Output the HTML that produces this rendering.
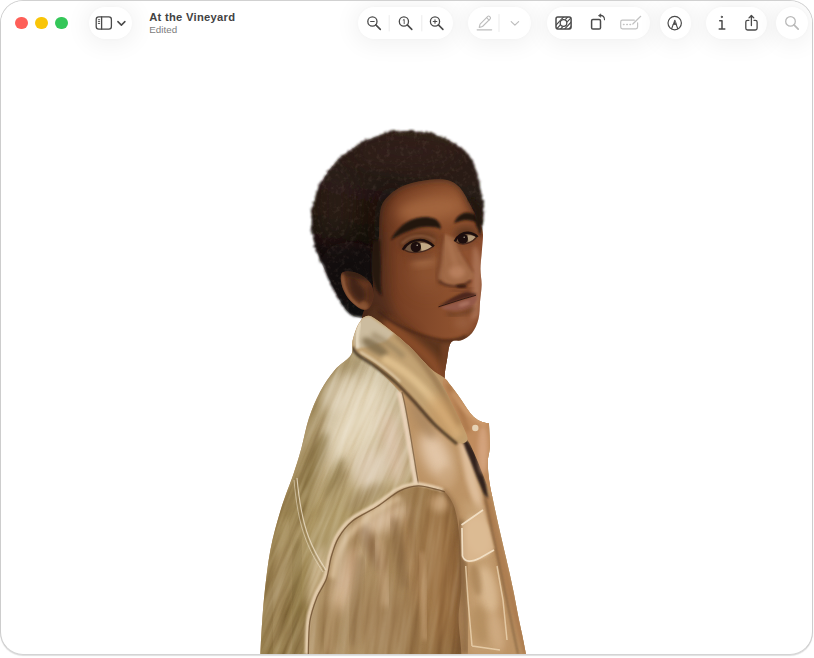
<!DOCTYPE html>
<html lang="en"><head><meta charset="utf-8"><title>At the Vineyard</title>
<style>

html,body{margin:0;padding:0;background:#fff;}
body{width:814px;height:658px;overflow:hidden;position:relative;font-family:"Liberation Sans",sans-serif;}
.win{position:absolute;left:0;top:0;width:811px;height:653px;border:1px solid #cdcdcd;border-top-color:#d1d1d1;border-bottom-color:#d4d4d4;border-radius:23px;background:#fff;overflow:hidden;box-shadow:0 1px 1px rgba(0,0,0,.13);}
.tb{position:absolute;left:0;top:0;width:100%;height:60px;background:#fff;}
.pill{position:absolute;top:6.2px;height:31.5px;border-radius:16px;background:#fff;box-shadow:0 2px 22px 5px rgba(0,0,0,.05),0 0 4px rgba(0,0,0,.02);}
.dot{position:absolute;top:15.7px;width:12.6px;height:12.6px;border-radius:50%;}
.title{position:absolute;left:148.2px;top:10.3px;font-size:11.2px;font-weight:bold;color:#424242;letter-spacing:.28px;white-space:nowrap;}
.sub{position:absolute;left:148.3px;top:23.4px;font-size:9.8px;color:#7d7d7d;white-space:nowrap;}
.ico{position:absolute;left:0;top:0;}
.photo{position:absolute;left:-1px;top:-1px;}

</style></head>
<body>
<div class="win">

<div class="tb"></div>
<div class="dot" style="left:14.2px;background:#fe5f58;"></div>
<div class="dot" style="left:34.2px;background:#f9c507;"></div>
<div class="dot" style="left:54.2px;background:#34c759;"></div>
<div class="pill" style="left:88px;width:42.5px;"></div>
<div class="pill" style="left:356.5px;width:95.5px;"></div>
<div class="pill" style="left:466.5px;width:63.5px;"></div>
<div class="pill" style="left:546px;width:103px;"></div>
<div class="pill" style="left:659px;width:30.5px;"></div>
<div class="pill" style="left:705px;width:61px;"></div>
<div class="pill" style="left:775px;width:32px;"></div>
<div class="title">At the Vineyard</div>
<div class="sub">Edited</div>
<svg class="ico" style="left:-1px;top:-1px" width="814" height="50" viewBox="0 0 814 50" fill="none" stroke="#4a4a4a" stroke-width="1.3" stroke-linecap="round" stroke-linejoin="round">
 <!-- sidebar -->
 <rect x="96.2" y="16.9" width="15.2" height="12.2" rx="2.6"/>
 <path d="M101.6 17v12"/>
 <path d="M98.3 19.7h1.4M98.3 21.6h1.4M98.3 23.5h1.4" stroke-width="0.9"/>
 <path d="M117.9 21.6l3.500 3.500 3.500-3.500" stroke-width="1.500"/>
 <!-- zoom out -->
 <g>
  <circle cx="372.400" cy="21.500" r="4.600"/><path d="M375.800 24.900l4.500 4.500" stroke-width="1.600"/><path d="M370.600 21.500h3.600" stroke-width="1.100"/>
  <circle cx="403.900" cy="21.500" r="4.600"/><path d="M407.300 24.900l4.500 4.500" stroke-width="1.600"/><path d="M403.200 20.100l1-.7v4.300" stroke-width="0.900"/>
  <circle cx="435" cy="21.500" r="4.600"/><path d="M438.400 24.900l4.500 4.500" stroke-width="1.600"/><path d="M433.200 21.500h3.600M435 19.700v3.600" stroke-width="1.100"/>
 </g>
 <path d="M389.200 15.500v15.500M421.800 15.500v15.500" stroke="#ececec" stroke-width="1"/>
 <!-- markup pencil (disabled) -->
 <g stroke="#bdbdbd" stroke-width="1.1">
  <path d="M479.200 27.400l.9-3.300 7.700-7.700a1.150 1.150 0 0 1 1.600 0l.8.8a1.150 1.150 0 0 1 0 1.600l-7.700 7.700z"/>
  <path d="M486.600 17.700l2.400 2.400"/>
  <path d="M477.200 29.800h14.400" stroke-width="1.3"/>
  <path d="M511.200 21.600l3.700 3.500 3.700-3.500" stroke-width="1.2"/>
 </g>
 <path d="M499 14.500v17" stroke="#ebebeb" stroke-width="1"/>
 <!-- remove background -->
 <g>
  <clipPath id="rbclip"><rect x="556" y="17.100" width="15.100" height="11.800" rx="1.800"/></clipPath>
  <path d="M551.5 30l13-14M555.6 30l13-14M559.7 30l13-14M563.8 30l13-14M567.9 30l13-14M572.0 30l13-14" stroke-width="1.150" clip-path="url(#rbclip)" stroke-linecap="butt"/>
  <circle cx="563.500" cy="23" r="3.800" fill="#fff" stroke="none"/>
  <circle cx="563.500" cy="23" r="3.300" fill="#fff" stroke-width="1.250"/>
  <rect x="556" y="17.100" width="15.100" height="11.800" rx="1.800" stroke-width="1.500"/>
 </g>
 <!-- rotate -->
 <g>
  <rect x="591.600" y="19.600" width="8.900" height="9.400" rx="1.300" stroke-width="1.500"/>
  <path d="M600.200 15.400c2.900.1 4.300 1.600 4.300 4.300" stroke-width="1.100"/>
  <path d="M598.700 15.400l2.100-1.500v3z" fill="#4a4a4a" stroke-width="0.700"/>
 </g>
 <!-- form fill (disabled) -->
 <g stroke="#c2c2c2" stroke-width="1.200">
  <path d="M634.300 20.200h-11.900a1.700 1.700 0 0 0-1.700 1.700v5.200a1.700 1.700 0 0 0 1.700 1.700h13.500a1.700 1.700 0 0 0 1.700-1.700v-4.300"/>
  <path d="M632.800 24l7.900-7.700"/>
  <path d="M623.500 24.500h.5M626.800 24.500h.5M630 24.500h.5" stroke-width="1.500"/>
 </g>
 <!-- markup circle -->
 <g>
  <circle cx="674.700" cy="23.100" r="6.700" stroke-width="1.200"/>
  <path d="M674.700 20.300l-1.500 4.100h3z" fill="#4a4a4a" stroke-width="0.800"/>
  <path d="M673.300 24.200l-1.700 4.600M676.100 24.200l1.700 4.600" stroke-width="1.100"/>
 </g>
 <!-- info -->
 <g stroke-width="1.500">
  <path d="M719.700 20.800h2.300v8.100M719.200 28.900h5.600"/>
  <circle cx="721.800" cy="16.900" r="0.700" fill="#4a4a4a" stroke-width="0.800"/>
 </g>
 <!-- share -->
 <g stroke-width="1.300">
  <path d="M748.900 20.300h-1.300a1.800 1.800 0 0 0-1.800 1.800v6.100a1.800 1.800 0 0 0 1.800 1.800h7.700a1.800 1.800 0 0 0 1.800-1.800v-6.100a1.800 1.800 0 0 0-1.800-1.800h-1.300"/>
  <path d="M751.400 25.500v-9.600M749 17.900l2.400-2.400 2.400 2.400"/>
 </g>
 <!-- search (disabled) -->
 <g stroke="#b9b9b9" stroke-width="1.300">
  <circle cx="790.500" cy="21.400" r="4.800"/><path d="M794 24.900l4.200 4.200" stroke-width="1.700"/>
 </g>
</svg>

<svg class="photo" width="814" height="658" viewBox="0 0 814 658">

<defs>
 <filter id="b05" x="-20%" y="-20%" width="140%" height="140%"><feGaussianBlur stdDeviation="0.55"/></filter>
 <filter id="b1" x="-20%" y="-20%" width="140%" height="140%"><feGaussianBlur stdDeviation="1"/></filter>
 <filter id="b2" x="-30%" y="-30%" width="160%" height="160%"><feGaussianBlur stdDeviation="2"/></filter>
 <filter id="b3" x="-30%" y="-30%" width="160%" height="160%"><feGaussianBlur stdDeviation="3.5"/></filter>
 <filter id="b6" x="-40%" y="-40%" width="180%" height="180%"><feGaussianBlur stdDeviation="6"/></filter>
 <filter id="b10" x="-50%" y="-50%" width="200%" height="200%"><feGaussianBlur stdDeviation="10"/></filter>
 <filter id="b16" x="-60%" y="-60%" width="220%" height="220%"><feGaussianBlur stdDeviation="16"/></filter>
 <filter id="fuzz" x="-5%" y="-5%" width="110%" height="110%">
  <feTurbulence type="fractalNoise" baseFrequency="0.07" numOctaves="1" seed="2" result="n0"/>
  <feDisplacementMap in="SourceGraphic" in2="n0" scale="7" xChannelSelector="R" yChannelSelector="G" result="d0"/>
  <feTurbulence type="fractalNoise" baseFrequency="0.4" numOctaves="2" seed="4" result="n"/>
  <feDisplacementMap in="d0" in2="n" scale="3.5" xChannelSelector="R" yChannelSelector="G"/>
  <feGaussianBlur stdDeviation="0.9"/>
 </filter>
 <filter id="hairtex" x="0" y="0" width="100%" height="100%">
  <feTurbulence type="fractalNoise" baseFrequency="0.22" numOctaves="3" seed="9" result="n"/>
  <feColorMatrix in="n" type="matrix" values="0 0 0 0 0.30  0 0 0 0 0.21  0 0 0 0 0.16  1.4 0 0 0 -0.70"/>
  <feGaussianBlur stdDeviation="0.6"/>
 </filter>
 <filter id="cloth" x="0" y="0" width="100%" height="100%">
  <feTurbulence type="fractalNoise" baseFrequency="0.035 0.12" numOctaves="3" seed="3" result="n"/>
  <feColorMatrix in="n" type="matrix" values="0 0 0 0 1  0 0 0 0 0.95  0 0 0 0 0.85  1.8 0 0 0 -0.85"/>
 </filter>
 <filter id="clothd" x="0" y="0" width="100%" height="100%">
  <feTurbulence type="fractalNoise" baseFrequency="0.04 0.10" numOctaves="3" seed="11" result="n"/>
  <feColorMatrix in="n" type="matrix" values="0 0 0 0 0.35  0 0 0 0 0.22  0 0 0 0 0.10  0 1.8 0 0 -0.85"/>
 </filter>
 <clipPath id="cHair"><path d="M362.0,318.0 C356.4,317.4 355.0,317.0 351.6,314.6 C348.2,312.2 345.1,308.6 341.8,303.5 C338.5,298.4 335.3,290.6 332.0,284.0 C328.7,277.4 324.9,270.6 322.0,264.0 C319.1,257.4 316.5,250.6 314.7,244.6 C312.9,238.6 311.4,233.4 311.0,228.0 C310.6,222.6 311.0,217.7 312.0,212.0 C313.0,206.3 314.4,200.6 317.0,194.0 C319.6,187.4 323.2,178.9 327.5,172.5 C331.8,166.1 336.8,160.4 342.5,155.5 C348.2,150.6 355.2,146.6 362.0,143.0 C368.8,139.4 375.8,136.0 383.5,134.0 C391.2,132.0 400.2,131.1 408.0,131.0 C415.8,130.9 423.0,131.8 430.0,133.5 C437.0,135.2 443.8,137.8 450.0,141.0 C456.2,144.2 462.7,148.3 467.0,153.0 C471.3,157.7 473.4,163.0 475.7,169.0 C478.0,175.0 479.4,182.4 480.6,189.0 C481.8,195.6 482.7,202.0 483.0,208.5 C483.3,215.0 484.7,221.1 482.5,228.0 C480.3,234.9 480.4,239.7 470.0,250.0 C459.6,260.3 434.2,278.7 420.0,290.0 C405.8,301.3 394.7,313.3 385.0,318.0 C375.3,322.7 367.6,318.6 362.0,318.0Z"/></clipPath>
 <clipPath id="cSkin"><path d="M378.6,240.0 C379.7,234.7 378.8,219.9 380.0,213.0 C381.2,206.1 382.2,203.1 386.0,198.6 C389.8,194.1 396.0,189.1 403.0,186.0 C410.0,182.9 420.5,181.0 427.8,180.0 C435.1,179.0 441.7,178.7 447.0,180.0 C452.3,181.3 455.9,183.7 459.7,187.6 C463.4,191.5 466.6,198.4 469.5,203.5 C472.4,208.6 475.1,214.2 477.0,218.0 C478.9,221.8 480.0,223.2 481.0,226.0 C482.0,228.8 482.9,230.4 483.0,234.7 C483.1,239.0 482.2,246.3 481.8,252.0 C481.4,257.7 480.4,263.5 480.4,269.0 C480.4,274.5 481.7,279.5 481.6,285.0 C481.5,290.5 480.5,296.3 480.0,302.0 C479.5,307.7 479.8,313.8 478.5,319.0 C477.2,324.2 474.8,329.5 472.0,333.0 C469.2,336.5 465.5,338.4 462.0,340.0 C458.5,341.6 453.5,339.2 451.0,342.5 C448.5,345.8 448.1,353.8 447.0,359.7 C445.9,365.6 444.5,372.6 444.5,378.0 C444.5,383.4 449.4,393.0 447.0,392.0 C444.6,391.0 436.4,379.5 430.0,372.0 C423.6,364.5 416.1,354.5 408.6,347.0 C401.1,339.5 391.8,332.2 385.0,327.0 C378.2,321.8 371.8,317.5 368.0,316.0 C364.2,314.5 362.3,319.7 362.0,318.0 C361.7,316.3 364.2,309.7 366.0,306.0 C367.8,302.3 371.9,302.2 373.0,296.0 C374.1,289.8 372.4,277.6 372.5,269.0 C372.6,260.4 372.7,249.4 373.7,244.6 C374.7,239.8 377.6,245.3 378.6,240.0Z"/></clipPath>
 <clipPath id="cEar"><path d="M346.0,271.5 C343.8,271.7 342.4,272.1 341.5,273.5 C340.6,274.9 340.6,277.4 340.8,280.0 C341.1,282.6 341.8,286.0 343.0,289.0 C344.2,292.0 346.0,295.3 348.0,298.0 C350.0,300.7 352.7,303.1 355.0,305.0 C357.3,306.9 359.8,308.8 362.0,309.5 C364.2,310.2 366.3,310.1 368.0,309.0 C369.7,307.9 371.1,305.5 372.0,303.0 C372.9,300.5 373.7,297.2 373.5,294.0 C373.3,290.8 372.6,286.8 371.0,284.0 C369.4,281.2 366.7,278.9 364.0,277.0 C361.3,275.1 358.0,273.4 355.0,272.5 C352.0,271.6 348.2,271.3 346.0,271.5Z"/></clipPath>
 <clipPath id="cJacket"><path d="M362.4,318.0 C363.7,317.7 366.2,314.7 370.0,316.0 C373.8,317.3 378.6,321.1 385.0,326.0 C391.4,330.9 401.1,338.6 408.6,345.6 C416.1,352.6 424.0,362.6 430.0,368.0 C436.0,373.4 441.2,375.3 444.5,378.0 C447.8,380.7 447.0,380.7 449.6,384.0 C452.2,387.3 456.4,392.9 460.0,398.0 C463.6,403.1 468.2,410.7 471.5,414.5 C474.8,418.3 477.1,419.5 480.0,421.0 C482.9,422.5 487.5,423.1 489.0,423.5 L489.0,423.5 C489.1,427.4 490.0,440.6 489.8,447.0 C489.6,453.4 487.9,456.2 487.8,462.0 C487.7,467.8 488.5,475.7 489.4,482.0 C490.3,488.3 491.6,493.5 493.0,500.0 C494.4,506.5 495.8,513.5 497.5,521.0 C499.2,528.5 501.0,536.2 503.0,545.0 C505.0,553.8 507.9,565.6 509.7,573.8 C511.5,582.0 512.6,587.2 514.0,594.0 C515.4,600.8 516.5,607.6 517.8,614.3 C519.1,621.0 520.6,627.4 522.0,634.0 C523.4,640.6 525.3,650.7 526.0,654.0 L260.4,654.0 C260.6,650.1 260.9,640.5 261.6,630.5 C262.3,620.5 263.0,607.5 264.5,594.0 C266.0,580.5 267.8,563.7 270.5,549.5 C273.2,535.3 277.1,521.9 281.0,509.0 C284.9,496.1 290.6,482.7 294.0,472.4 C297.4,462.1 299.1,456.5 301.6,447.4 C304.1,438.3 305.9,427.2 309.0,418.0 C312.1,408.8 315.7,400.0 320.0,392.0 C324.3,384.0 329.6,376.2 334.8,370.0 C340.0,363.8 348.1,359.8 351.0,355.0 C353.9,350.2 351.6,345.5 352.5,341.0 C353.4,336.5 354.9,331.8 356.5,328.0 C358.1,324.2 361.4,319.7 362.4,318.0 Z"/></clipPath>
 <linearGradient id="gHair" x1="0.5" y1="0" x2="0.35" y2="1">
  <stop offset="0" stop-color="#2e2019"/><stop offset="0.4" stop-color="#241811"/><stop offset="0.75" stop-color="#150d0a"/><stop offset="1" stop-color="#100a08"/>
 </linearGradient>
 <linearGradient id="gSkin" x1="0" y1="0" x2="1" y2="0">
  <stop offset="0" stop-color="#482616"/><stop offset="0.3" stop-color="#784024"/><stop offset="0.8" stop-color="#905330"/><stop offset="1" stop-color="#8c4e30"/>
 </linearGradient>
</defs>


<g filter="url(#fuzz)">
 <path d="M362.0,318.0 C356.4,317.4 355.0,317.0 351.6,314.6 C348.2,312.2 345.1,308.6 341.8,303.5 C338.5,298.4 335.3,290.6 332.0,284.0 C328.7,277.4 324.9,270.6 322.0,264.0 C319.1,257.4 316.5,250.6 314.7,244.6 C312.9,238.6 311.4,233.4 311.0,228.0 C310.6,222.6 311.0,217.7 312.0,212.0 C313.0,206.3 314.4,200.6 317.0,194.0 C319.6,187.4 323.2,178.9 327.5,172.5 C331.8,166.1 336.8,160.4 342.5,155.5 C348.2,150.6 355.2,146.6 362.0,143.0 C368.8,139.4 375.8,136.0 383.5,134.0 C391.2,132.0 400.2,131.1 408.0,131.0 C415.8,130.9 423.0,131.8 430.0,133.5 C437.0,135.2 443.8,137.8 450.0,141.0 C456.2,144.2 462.7,148.3 467.0,153.0 C471.3,157.7 473.4,163.0 475.7,169.0 C478.0,175.0 479.4,182.4 480.6,189.0 C481.8,195.6 482.7,202.0 483.0,208.5 C483.3,215.0 484.7,221.1 482.5,228.0 C480.3,234.9 480.4,239.7 470.0,250.0 C459.6,260.3 434.2,278.7 420.0,290.0 C405.8,301.3 394.7,313.3 385.0,318.0 C375.3,322.7 367.6,318.6 362.0,318.0Z" fill="url(#gHair)"/>
</g>
<g clip-path="url(#cHair)">
 <ellipse cx="405" cy="152" rx="55" ry="16" fill="#35221b" opacity=".55" filter="url(#b10)"/>
 <ellipse cx="335" cy="205" rx="18" ry="45" fill="#33211a" opacity=".55" filter="url(#b10)"/>
 <ellipse cx="350" cy="280" rx="34" ry="40" fill="#0f0908" opacity=".6" filter="url(#b16)"/>
 <ellipse cx="392" cy="225" rx="18" ry="40" fill="#120b09" opacity=".65" filter="url(#b10)"/>
 <rect x="300" y="120" width="200" height="210" filter="url(#hairtex)" opacity=".3"/>
</g>


<path d="M378.6,240.0 C379.7,234.7 378.8,219.9 380.0,213.0 C381.2,206.1 382.2,203.1 386.0,198.6 C389.8,194.1 396.0,189.1 403.0,186.0 C410.0,182.9 420.5,181.0 427.8,180.0 C435.1,179.0 441.7,178.7 447.0,180.0 C452.3,181.3 455.9,183.7 459.7,187.6 C463.4,191.5 466.6,198.4 469.5,203.5 C472.4,208.6 475.1,214.2 477.0,218.0 C478.9,221.8 480.0,223.2 481.0,226.0 C482.0,228.8 482.9,230.4 483.0,234.7 C483.1,239.0 482.2,246.3 481.8,252.0 C481.4,257.7 480.4,263.5 480.4,269.0 C480.4,274.5 481.7,279.5 481.6,285.0 C481.5,290.5 480.5,296.3 480.0,302.0 C479.5,307.7 479.8,313.8 478.5,319.0 C477.2,324.2 474.8,329.5 472.0,333.0 C469.2,336.5 465.5,338.4 462.0,340.0 C458.5,341.6 453.5,339.2 451.0,342.5 C448.5,345.8 448.1,353.8 447.0,359.7 C445.9,365.6 444.5,372.6 444.5,378.0 C444.5,383.4 449.4,393.0 447.0,392.0 C444.6,391.0 436.4,379.5 430.0,372.0 C423.6,364.5 416.1,354.5 408.6,347.0 C401.1,339.5 391.8,332.2 385.0,327.0 C378.2,321.8 371.8,317.5 368.0,316.0 C364.2,314.5 362.3,319.7 362.0,318.0 C361.7,316.3 364.2,309.7 366.0,306.0 C367.8,302.3 371.9,302.2 373.0,296.0 C374.1,289.8 372.4,277.6 372.5,269.0 C372.6,260.4 372.7,249.4 373.7,244.6 C374.7,239.8 377.6,245.3 378.6,240.0Z" fill="url(#gSkin)"/>
<g clip-path="url(#cSkin)">
 <!-- forehead light -->
 <ellipse cx="430" cy="209" rx="33" ry="13" transform="rotate(-8 430 209)" fill="#a5683f" opacity=".9" filter="url(#b6)"/>
 <!-- hairline shadow -->
 <path d="M376.0,256.0 C376.2,248.8 375.5,223.0 377.0,213.0 C378.5,203.0 380.7,201.0 385.0,196.0 C389.3,191.0 395.8,186.2 403.0,183.0 C410.2,179.8 420.5,178.0 428.0,177.0 C435.5,176.0 442.3,175.7 448.0,177.0 C453.7,178.3 458.0,180.8 462.0,185.0 C466.0,189.2 468.8,195.8 472.0,202.0 C475.2,208.2 479.5,218.7 481.0,222.0" fill="none" stroke="#2a1a14" stroke-width="8" opacity=".7" filter="url(#b3)"/>
 <!-- left side/temple shadow -->
 <path d="M366,230 L383,232 L384,262 L386,296 L396,318 L420,338 L380,340 L360,320Z" fill="#4a2a1b" opacity=".65" filter="url(#b6)"/>
 <!-- cheek light -->
 <ellipse cx="428" cy="272" rx="16" ry="19" fill="#935935" opacity=".75" filter="url(#b10)"/>
 
 <ellipse cx="424" cy="262" rx="13" ry="5" transform="rotate(-8 424 262)" fill="#a66e49" opacity=".7" filter="url(#b3)"/>
 <!-- right cheek pinkish -->
 <path d="M474,244 C480,252 483,262 482,276 C481,290 480,304 479,316 L470,322 C474,300 470,268 474,244Z" fill="#ab7354" opacity=".9" filter="url(#b2)"/>
 <!-- nose -->
 <path d="M445,234 C443,242 442,250 441.500,257 C441,265 439,271 438,276 C437.500,280 441,283 446,284.500 C452,286.500 460,286.500 466,283 C471,280.500 474.500,277 473.500,273.500 C471,268 466,262 462,255 C459,249 457,243 455.500,238Z" fill="#a36c49" opacity=".95" filter="url(#b1)"/>
 <ellipse cx="457" cy="272" rx="8" ry="6.500" fill="#bb8260" opacity=".85" filter="url(#b2)"/>
 <path d="M449,240 C451,250 453,258 456,266" fill="none" stroke="#b47c58" stroke-width="3.500" opacity=".75" filter="url(#b2)"/>
 <path d="M443,234 C441,246 441,258 439,268 C437,275 436.500,280 441,283.500" fill="none" stroke="#663924" stroke-width="3" opacity=".6" filter="url(#b2)"/>
 <path d="M457,242 C460,252 466,262 473.500,272" fill="none" stroke="#7d4a30" stroke-width="1.600" opacity=".55" filter="url(#b1)"/>
 <path d="M439,281 C446,287.500 461,288.500 471,280.500" fill="none" stroke="#4f2b1c" stroke-width="2.400" opacity=".75" filter="url(#b1)"/>
 <ellipse cx="461.500" cy="286.300" rx="5.500" ry="1.900" fill="#30180f" opacity=".9" filter="url(#b1)"/>
 <path d="M452,290 C458,292 466,291 472,288" fill="none" stroke="#5c3322" stroke-width="3" opacity=".45" filter="url(#b2)"/>
 <!-- eye sockets -->
 <ellipse cx="418" cy="241" rx="19" ry="8.500" transform="rotate(-8 418 241)" fill="#54301f" opacity=".8" filter="url(#b3)"/>
 <ellipse cx="466" cy="234" rx="12" ry="8" fill="#54301f" opacity=".8" filter="url(#b3)"/>
 <ellipse cx="420" cy="257" rx="14" ry="3" transform="rotate(-6 420 257)" fill="#6a3b26" opacity=".5" filter="url(#b2)"/>
 <ellipse cx="466" cy="247" rx="9" ry="2.500" transform="rotate(-8 466 247)" fill="#7a4a30" opacity=".5" filter="url(#b2)"/>
 <!-- eyebrows -->
 <path d="M390.500,240.500 C395,231 402,224 411,220 C419,216.500 428,216 434,218.500 C438.500,220.500 441,224.500 441,229 C435,226.500 428,226 420,227.500 C409,230 398,235.500 390.500,240.500Z" fill="#23150f" filter="url(#b1)"/>
 <path d="M454,223.500 C456,217 461,213 467,212.500 C472,212.500 476,214.500 478.500,218.500 C479,220.500 479,222.500 478.500,223.500 C474,220.500 468,219.500 463,220.500 C459,221.300 456,222.500 454,223.500Z" fill="#23150f" filter="url(#b1)"/>
 <g filter="url(#b05)">
 <!-- left eye -->
 <path d="M404,248.800 C408,244 414,241.200 420,241.300 C425,241.500 429.500,243.500 432.700,246.300 C429,250 423,252.500 417,252.800 C412,252.900 407,251.200 404,248.800Z" fill="#6e5440"/>
 <path d="M420.500,243 C425,242.500 429,244 432,246.400 C429.500,249 426,250.700 421.500,251.500Z" fill="#c0a884"/>
 <circle cx="415.800" cy="247" r="5.200" fill="#1b0f0a"/>
 <circle cx="417.200" cy="245.200" r="0.800" fill="#d8c8b8" opacity=".8"/>
 <path d="M402.800,249.800 C406.500,243.500 413.500,239.800 420.500,240 C426,240.300 430.500,243 433.800,246.500" fill="none" stroke="#1b0f0a" stroke-width="2.600"/>
 <path d="M404,249.500 C410,254 422,253.800 432.500,247" fill="none" stroke="#40231a" stroke-width="1.200" opacity=".9"/>
 <path d="M402,243.500 C407,238 415,235.500 422,236 C427.500,236.500 432,238.500 435,241.500" fill="none" stroke="#9f6a4a" stroke-width="2" opacity=".7" filter="url(#b1)"/>
 <!-- right eye -->
 <path d="M456,241 C458.500,236.800 463,234 468,234 C471.500,234.200 474.500,235.300 476,236.500 C474,240.500 469,243.500 464,243.800 C460.500,243.800 457.500,242.800 456,241Z" fill="#6e5440"/>
 <path d="M467.500,235.300 C470.500,235 473.500,235.700 475.500,236.800 C474,239.500 471.500,241.300 468.500,242.300Z" fill="#b59c7c"/>
 <circle cx="462.800" cy="238.900" r="5" fill="#1b0f0a"/>
 <circle cx="464.200" cy="237.200" r="0.800" fill="#d8c8b8" opacity=".7"/>
 <path d="M454.800,241.500 C457.500,235.500 463,232.500 468,232.700 C472,233 475.500,234.800 477.500,237" fill="none" stroke="#1b0f0a" stroke-width="2.600"/>
 <path d="M456,241.800 C460,245.500 469,245 476,238" fill="none" stroke="#40231a" stroke-width="1.200" opacity=".9"/>
 </g>
 <!-- lips -->
 <path d="M438.500,306.800 C445,302 451,298 457,295.300 C461,293.300 464,291.800 467.500,292 C470,292.300 472,293.500 476,293.500 C476.500,294.500 476,295.500 475,296 C470,297.500 466,298.500 462,299.500 C454,302 446,305 438.500,306.800Z" fill="#4e281d" filter="url(#b1)"/>
 <path d="M440,307 C448,305 456,302 462,300 C467,298.500 472,297 476.500,295.500 C478,299 476,304 471,307 C465,310.500 457,311.500 450,310.500 C446,310 442,308.500 440,307Z" fill="#945a49" filter="url(#b1)"/>
 <ellipse cx="464" cy="304" rx="6" ry="2" transform="rotate(-18 464 304)" fill="#b47b68" opacity=".7" filter="url(#b1)"/>
 <path d="M438.500,306.800 C446,304.500 455,301.500 462,299.300 C467,297.800 472,296.500 476,295.200" fill="none" stroke="#2d1610" stroke-width="1" opacity=".9"/>
 <path d="M447,313.500 C455,316.500 466,314.500 474,308" fill="none" stroke="#54301f" stroke-width="3" opacity=".65" filter="url(#b2)"/>
 <!-- chin light -->
 <ellipse cx="463" cy="323" rx="9" ry="6" fill="#9c6344" opacity=".7" filter="url(#b3)"/>
 <!-- under-jaw shadow + neck -->
 <path d="M376,306 C392,322 412,334 436,340 C446,342 456,341 466,337 C472,334 476,330 479,324 L482,350 L440,400 L360,330Z" fill="#54301c" opacity=".85" filter="url(#b2)"/>
 <path d="M384,322 C400,334 418,346 432,362 C438,370 442,378 445,386" fill="none" stroke="#8e4f2c" stroke-width="12" opacity=".95" filter="url(#b3)"/>
 <path d="M441,343 L452,342 L448,392 L440,378Z" fill="#7a4528" opacity=".7" filter="url(#b2)"/>
 <path d="M378,311 C386,318 394,323 402,327 C414,333 428,338 442,340.500 C450,341.500 458,340 466,336" fill="none" stroke="#432416" stroke-width="3" opacity=".6" filter="url(#b1)"/>
</g>


<path d="M346.0,271.5 C343.8,271.7 342.4,272.1 341.5,273.5 C340.6,274.9 340.6,277.4 340.8,280.0 C341.1,282.6 341.8,286.0 343.0,289.0 C344.2,292.0 346.0,295.3 348.0,298.0 C350.0,300.7 352.7,303.1 355.0,305.0 C357.3,306.9 359.8,308.8 362.0,309.5 C364.2,310.2 366.3,310.1 368.0,309.0 C369.7,307.9 371.1,305.5 372.0,303.0 C372.9,300.5 373.7,297.2 373.5,294.0 C373.3,290.8 372.6,286.8 371.0,284.0 C369.4,281.2 366.7,278.9 364.0,277.0 C361.3,275.1 358.0,273.4 355.0,272.5 C352.0,271.6 348.2,271.3 346.0,271.5Z" fill="#6a3b24"/>
<g clip-path="url(#cEar)">
 <path d="M350,277 C348,284 350,293 356,299 C361,303 366,301 366,295 C366,289 361,286 358,282 C356,279 353,276 350,277Z" fill="#3e2216" opacity=".9" filter="url(#b2)"/>
 <path d="M343,274 C342,282 345,291 351,299 C356,305 362,308 367,307" fill="none" stroke="#96603e" stroke-width="3" opacity=".9" filter="url(#b1)"/>
 <ellipse cx="364" cy="305" rx="5" ry="3.500" fill="#8a5434" opacity=".8" filter="url(#b1)"/>
 <path d="M340,270 L365,270 L372,282 L345,276Z" fill="#22130d" opacity=".7" filter="url(#b2)"/>
 <ellipse cx="371" cy="294" rx="4" ry="12" fill="#4a2819" opacity=".7" filter="url(#b2)"/>
</g>


<path d="M373,240 C371,255 370,268 373,280 C375,288 378,293 382,296 C381,288 380,280 381,270 C381,260 380,250 380,240Z" fill="#21140f" opacity=".9" filter="url(#b1)"/>


<path d="M470,196 C476,202 480,210 481.500,220 C482.500,228 482.500,233 481,237 C478,232 477,226 475.500,220 C474,212 471,204 468,198Z" fill="#21150f" filter="url(#fuzz)"/>


<defs>
 <filter id="streak" x="0" y="0" width="100%" height="100%" color-interpolation-filters="sRGB">
  <feTurbulence type="fractalNoise" baseFrequency="0.16 0.012" numOctaves="3" seed="5" result="n"/>
  <feColorMatrix in="n" type="matrix" values="1.3 0 0 0 -0.15  1.3 0 0 0 -0.15  1.3 0 0 0 -0.15  0 0 0 0 1"/>
 </filter>
 <filter id="streak2" x="0" y="0" width="100%" height="100%" color-interpolation-filters="sRGB">
  <feTurbulence type="fractalNoise" baseFrequency="0.11 0.010" numOctaves="3" seed="17" result="n"/>
  <feColorMatrix in="n" type="matrix" values="1.3 0 0 0 -0.15  1.3 0 0 0 -0.15  1.3 0 0 0 -0.15  0 0 0 0 1"/>
 </filter>
 <linearGradient id="gBackV" x1="0" y1="340" x2="0" y2="654" gradientUnits="userSpaceOnUse">
  <stop offset="0" stop-color="#d3c7ab"/><stop offset="0.4" stop-color="#c2ae86"/><stop offset="0.55" stop-color="#b09a68"/><stop offset="0.75" stop-color="#9f8855"/><stop offset="1" stop-color="#937b49"/>
 </linearGradient>
 <linearGradient id="gSleeve" x1="310" y1="0" x2="462" y2="0" gradientUnits="userSpaceOnUse">
  <stop offset="0" stop-color="#b2956a"/><stop offset="0.45" stop-color="#a98a5e"/><stop offset="0.8" stop-color="#9a7649"/><stop offset="1" stop-color="#8c683e"/>
 </linearGradient>
 <clipPath id="cLapel"><path d="M362.4,318.0 C365.1,315.7 368.1,314.7 372.0,316.0 C375.9,317.3 379.9,321.1 386.0,326.0 C392.1,330.9 401.3,338.6 408.6,345.6 C415.9,352.6 424.2,361.1 430.0,368.0 C435.8,374.9 439.8,380.8 443.5,387.0 C447.2,393.2 449.5,398.9 452.5,405.0 C455.5,411.1 459.0,417.8 461.5,423.5 C464.0,429.2 468.2,436.4 467.5,439.5 C466.8,442.6 462.6,445.1 457.0,442.0 C451.4,438.9 441.2,428.3 434.0,421.0 C426.8,413.7 419.8,404.8 413.5,398.0 C407.2,391.2 402.2,385.7 396.0,380.0 C389.8,374.3 382.7,368.7 376.0,364.0 C369.3,359.3 360.0,355.3 356.0,352.0 C352.0,348.7 352.0,347.7 352.0,344.0 C352.0,340.3 354.3,334.3 356.0,330.0 C357.7,325.7 359.7,320.3 362.4,318.0Z"/></clipPath>
 <clipPath id="cBack"><path d="M352.0,340.0 C356.5,338.7 353.5,347.8 357.0,352.0 C360.5,356.2 366.2,358.7 373.0,365.0 C379.8,371.3 392.8,383.8 398.0,390.0 C403.2,396.2 401.8,393.7 404.0,402.0 C406.2,410.3 408.9,426.3 411.0,440.0 C413.1,453.7 418.7,475.8 416.5,484.0 C414.3,492.2 404.9,485.5 398.0,489.0 C391.1,492.5 382.8,500.0 375.0,505.0 C367.2,510.0 357.4,513.8 351.0,519.0 C344.6,524.2 340.3,530.0 336.7,536.0 C333.1,542.0 331.5,548.2 329.5,555.0 C327.5,561.8 327.1,570.2 324.7,577.0 C322.3,583.8 317.8,588.8 315.0,596.0 C312.2,603.2 309.4,610.3 308.0,620.0 C306.6,629.7 307.0,637.3 306.5,654.0 C306.0,670.7 317.8,709.0 305.0,720.0 C292.2,731.0 240.8,746.7 230.0,720.0 C219.2,693.3 230.0,606.7 240.0,560.0 C250.0,513.3 275.0,473.3 290.0,440.0 C305.0,406.7 319.7,376.7 330.0,360.0 C340.3,343.3 347.5,341.3 352.0,340.0Z"/></clipPath>
 <clipPath id="cSleeve"><path d="M416.5,484.0 C422.6,483.8 430.1,486.5 434.5,487.5 C438.9,488.5 439.7,486.8 443.0,490.0 C446.3,493.2 451.5,498.4 454.3,507.0 C457.1,515.6 458.8,528.5 460.0,541.4 C461.2,554.3 461.6,571.4 461.4,584.3 C461.2,597.2 458.6,607.0 458.6,618.6 C458.6,630.2 460.5,637.1 461.4,654.0 C462.3,670.9 490.1,709.0 464.0,720.0 C437.9,731.0 331.2,731.0 305.0,720.0 C278.8,709.0 306.0,670.7 306.5,654.0 C307.0,637.3 306.6,629.7 308.0,620.0 C309.4,610.3 312.2,603.2 315.0,596.0 C317.8,588.8 322.3,583.8 324.7,577.0 C327.1,570.2 327.5,561.8 329.5,555.0 C331.5,548.2 333.1,542.0 336.7,536.0 C340.3,530.0 344.6,524.2 351.0,519.0 C357.4,513.8 367.2,510.0 375.0,505.0 C382.8,500.0 391.1,492.5 398.0,489.0 C404.9,485.5 410.4,484.2 416.5,484.0Z"/></clipPath>
</defs>
<path d="M362.4,318.0 C363.7,317.7 366.2,314.7 370.0,316.0 C373.8,317.3 378.6,321.1 385.0,326.0 C391.4,330.9 401.1,338.6 408.6,345.6 C416.1,352.6 424.0,362.6 430.0,368.0 C436.0,373.4 441.2,375.3 444.5,378.0 C447.8,380.7 447.0,380.7 449.6,384.0 C452.2,387.3 456.4,392.9 460.0,398.0 C463.6,403.1 468.2,410.7 471.5,414.5 C474.8,418.3 477.1,419.5 480.0,421.0 C482.9,422.5 487.5,423.1 489.0,423.5 L489.0,423.5 C489.1,427.4 490.0,440.6 489.8,447.0 C489.6,453.4 487.9,456.2 487.8,462.0 C487.7,467.8 488.5,475.7 489.4,482.0 C490.3,488.3 491.6,493.5 493.0,500.0 C494.4,506.5 495.8,513.5 497.5,521.0 C499.2,528.5 501.0,536.2 503.0,545.0 C505.0,553.8 507.9,565.6 509.7,573.8 C511.5,582.0 512.6,587.2 514.0,594.0 C515.4,600.8 516.5,607.6 517.8,614.3 C519.1,621.0 520.6,627.4 522.0,634.0 C523.4,640.6 525.3,650.7 526.0,654.0 L260.4,654.0 C260.6,650.1 260.9,640.5 261.6,630.5 C262.3,620.5 263.0,607.5 264.5,594.0 C266.0,580.5 267.8,563.7 270.5,549.5 C273.2,535.3 277.1,521.9 281.0,509.0 C284.9,496.1 290.6,482.7 294.0,472.4 C297.4,462.1 299.1,456.5 301.6,447.4 C304.1,438.3 305.9,427.2 309.0,418.0 C312.1,408.8 315.7,400.0 320.0,392.0 C324.3,384.0 329.6,376.2 334.8,370.0 C340.0,363.8 348.1,359.8 351.0,355.0 C353.9,350.2 351.6,345.5 352.5,341.0 C353.4,336.5 354.9,331.8 356.5,328.0 C358.1,324.2 361.4,319.7 362.4,318.0 Z" fill="#bc986a"/>
<g clip-path="url(#cJacket)">
 <!-- front panel base -->
 <rect x="400" y="380" width="140" height="280" fill="#bd9466"/>
 <!-- back panel -->
 <g clip-path="url(#cBack)">
  <rect x="230" y="300" width="320" height="400" fill="url(#gBackV)"/>
  <path d="M352.0,345.0 C349.1,349.2 340.1,362.2 334.8,370.0 C329.5,377.8 324.3,384.0 320.0,392.0 C315.7,400.0 312.1,408.8 309.0,418.0 C305.9,427.2 304.6,438.3 301.6,447.4 C298.6,456.5 294.6,462.1 290.8,472.4 C287.0,482.7 282.0,496.1 278.6,509.0 C275.2,521.9 272.9,535.3 270.5,549.5 C268.1,563.7 266.0,580.5 264.5,594.0 C263.0,607.5 262.3,620.5 261.6,630.5 C260.9,640.5 260.6,650.1 260.4,654.0" fill="none" stroke="#988050" stroke-width="34" opacity=".8" filter="url(#b10)"/>
  <ellipse cx="358" cy="422" rx="26" ry="48" transform="rotate(22 358 422)" fill="#e8dcc2" opacity=".9" filter="url(#b10)"/>
  <ellipse cx="340" cy="392" rx="14" ry="22" transform="rotate(35 340 392)" fill="#e6dac2" opacity=".7" filter="url(#b6)"/>
  <ellipse cx="393" cy="448" rx="9" ry="38" transform="rotate(-8 393 448)" fill="#dec4ac" opacity=".8" filter="url(#b6)"/>
  <ellipse cx="314" cy="462" rx="7" ry="32" transform="rotate(22 314 462)" fill="#86703f" opacity=".8" filter="url(#b3)"/>
  <ellipse cx="303" cy="500" rx="8" ry="30" transform="rotate(16 303 500)" fill="#907a4a" opacity=".6" filter="url(#b6)"/>
  <ellipse cx="334" cy="478" rx="5" ry="22" transform="rotate(25 334 478)" fill="#94804f" opacity=".65" filter="url(#b3)"/>
  <ellipse cx="370" cy="470" rx="16" ry="22" transform="rotate(20 370 470)" fill="#e6d6c2" opacity=".7" filter="url(#b6)"/>
  <ellipse cx="365" cy="497" rx="22" ry="8" transform="rotate(-32 365 497)" fill="#a28a62" opacity=".65" filter="url(#b3)"/>
  <ellipse cx="316" cy="575" rx="6" ry="30" transform="rotate(14 316 575)" fill="#d2bc98" opacity=".7" filter="url(#b3)"/>
  <ellipse cx="290" cy="560" rx="8" ry="45" transform="rotate(10 290 560)" fill="#b39d72" opacity=".5" filter="url(#b6)"/>
  <ellipse cx="276" cy="600" rx="9" ry="50" transform="rotate(6 276 600)" fill="#94794e" opacity=".75" filter="url(#b6)"/>
  <ellipse cx="296" cy="640" rx="14" ry="22" fill="#9e8459" opacity=".7" filter="url(#b6)"/>
  <path d="M322,560 C316,590 312,620 310,654" fill="none" stroke="#d8c29c" stroke-width="7" opacity=".7" filter="url(#b3)"/>
  <path d="M300,540 C296,575 294,610 294,654" fill="none" stroke="#8a7444" stroke-width="8" opacity=".55" filter="url(#b3)"/>
  <path d="M286,520 C280,560 277,600 276,654" fill="none" stroke="#bca678" stroke-width="5" opacity=".6" filter="url(#b3)"/>
  <path d="M345,470 C338,490 330,505 320,520" fill="none" stroke="#9a8456" stroke-width="6" opacity=".5" filter="url(#b3)"/>
  <rect x="200" y="250" width="300" height="460" transform="rotate(22 350 480)" filter="url(#streak)" opacity=".45" style="mix-blend-mode:soft-light"/>
 </g>
 <!-- sleeve -->
 <g clip-path="url(#cSleeve)">
  <rect x="230" y="300" width="320" height="400" fill="url(#gSleeve)"/>
  <ellipse cx="384" cy="520" rx="28" ry="11" transform="rotate(-28 384 520)" fill="#dcc0a0" opacity=".85" filter="url(#b6)"/>
  <ellipse cx="346" cy="580" rx="9" ry="36" transform="rotate(16 346 580)" fill="#dcbc9c" opacity=".85" filter="url(#b6)"/>
  <ellipse cx="372" cy="548" rx="6" ry="26" transform="rotate(-22 372 548)" fill="#8a6644" opacity=".7" filter="url(#b3)"/>
  <ellipse cx="440" cy="575" rx="18" ry="75" fill="#a27646" opacity=".7" filter="url(#b10)"/>
  <ellipse cx="412" cy="560" rx="7" ry="50" transform="rotate(-10 412 560)" fill="#bb9468" opacity=".55" filter="url(#b6)"/>
  <ellipse cx="385" cy="620" rx="30" ry="30" fill="#a07e54" opacity=".6" filter="url(#b10)"/>
  <ellipse cx="330" cy="630" rx="12" ry="28" fill="#9a7a4e" opacity=".7" filter="url(#b6)"/>
  <ellipse cx="456" cy="590" rx="5" ry="60" fill="#8a5e36" opacity=".7" filter="url(#b3)"/>
  <path d="M400,497 C380,507 360,520 346,538 C338,550 335,562 332,578" fill="none" stroke="#e0c6a2" stroke-width="7" opacity=".75" filter="url(#b2)"/>
  <path d="M394,518 C398,540 402,560 405,588" fill="none" stroke="#84623c" stroke-width="7" opacity=".7" filter="url(#b3)"/>
  <path d="M378,538 C382,560 384,580 386,606" fill="none" stroke="#cfae88" stroke-width="8" opacity=".7" filter="url(#b3)"/>
  <path d="M362,556 C358,584 354,612 352,646" fill="none" stroke="#8c6c44" stroke-width="7" opacity=".65" filter="url(#b3)"/>
  <path d="M421,552 C423,580 424,606 425,640" fill="none" stroke="#c6a278" stroke-width="5" opacity=".65" filter="url(#b2)"/>
  <path d="M340,590 C334,610 330,630 328,654" fill="none" stroke="#d4b68e" stroke-width="6" opacity=".6" filter="url(#b3)"/>
  <ellipse cx="440" cy="503" rx="10" ry="9" fill="#d4ae84" opacity=".7" filter="url(#b3)"/>
  <path d="M408,500 C412,520 414,540 414,560" fill="none" stroke="#8e6a42" stroke-width="5" opacity=".5" filter="url(#b3)"/>
  <rect x="250" y="420" width="300" height="300" transform="rotate(8 390 560)" filter="url(#streak2)" opacity=".35" style="mix-blend-mode:soft-light"/>
 </g>
 <!-- front panel shading -->
 <ellipse cx="436" cy="455" rx="13" ry="26" transform="rotate(-25 436 455)" fill="#e6cbae" opacity=".9" filter="url(#b6)"/>
 <ellipse cx="423" cy="420" rx="7" ry="22" transform="rotate(-30 423 420)" fill="#a98660" opacity=".7" filter="url(#b3)"/>
 <ellipse cx="447" cy="478" rx="9" ry="12" fill="#caa57c" opacity=".7" filter="url(#b3)"/>
 <path d="M458,442 L468,445 L476,476 L488,520 L476,512 L466,480Z" fill="#e0bf9c" opacity=".95" filter="url(#b2)"/>
 <path d="M462,500 C466,520 470,560 470,654 L500,654 C496,600 490,540 484,505Z" fill="#c6a276" opacity=".8" filter="url(#b3)"/>
 <ellipse cx="478" cy="536" rx="13" ry="20" transform="rotate(-12 478 536)" fill="#e2c6a2" opacity=".9" filter="url(#b3)"/>
 <ellipse cx="488" cy="590" rx="9" ry="24" transform="rotate(-12 488 590)" fill="#dcbc94" opacity=".85" filter="url(#b3)"/>
 <ellipse cx="480" cy="625" rx="8" ry="20" transform="rotate(-8 480 625)" fill="#b08a5c" opacity=".7" filter="url(#b3)"/>
 <ellipse cx="497" cy="632" rx="7" ry="20" transform="rotate(-12 497 632)" fill="#d4b088" opacity=".7" filter="url(#b3)"/>
 <ellipse cx="476" cy="580" rx="5" ry="16" transform="rotate(-10 476 580)" fill="#a07a4e" opacity=".6" filter="url(#b2)"/>
 <path d="M461,520 C464,560 465,600 466,654" fill="none" stroke="#84623c" stroke-width="6" opacity=".75" filter="url(#b2)"/>
 <path d="M487,498 C497,540 511,600 527,654" fill="none" stroke="#a8764a" stroke-width="8" opacity=".75" filter="url(#b2)"/>
 <path d="M481,478 C490,520 503,580 518,654" fill="none" stroke="#5a3f26" stroke-width="1.500" opacity=".6" filter="url(#b1)"/>
 <!-- dark gap -->
 <path d="M462.500,440 L468,441 L475,452 L481.500,469 L486,485 L488.500,499 L484,494 L477,478 L470.500,461 L465.500,449Z" fill="#33211a" filter="url(#b1)"/>
 <!-- right collar -->
 <path d="M444.5,378.0 C445.5,377.5 447.0,380.7 449.6,384.0 C452.2,387.3 456.4,392.9 460.0,398.0 C463.6,403.1 468.2,410.7 471.5,414.5 C474.8,418.3 477.1,419.5 480.0,421.0 C482.9,422.5 487.3,419.2 489.0,423.5 C490.7,427.8 490.2,440.6 490.0,447.0 C489.8,453.4 488.0,456.2 488.0,462.0 C488.0,467.8 489.0,475.7 490.0,482.0 C491.0,488.3 494.7,500.0 494.0,500.0 C493.3,500.0 488.7,488.3 486.0,482.0 C483.3,475.7 480.7,468.3 478.0,462.0 C475.3,455.7 471.8,447.8 470.0,444.0 C468.2,440.2 468.9,442.9 467.5,439.5 C466.1,436.1 464.0,429.2 461.5,423.5 C459.0,417.8 455.5,411.1 452.5,405.0 C449.5,398.9 444.8,391.5 443.5,387.0 C442.2,382.5 443.5,378.5 444.5,378.0Z" fill="#c08c5e"/>
 <path d="M447,384 C455,398 462,412 468,432" fill="none" stroke="#9c683a" stroke-width="4" opacity=".7" filter="url(#b2)"/>
 <path d="M452,392 C462,408 472,418 486,424" fill="none" stroke="#dfae80" stroke-width="3" opacity=".85" filter="url(#b2)"/>
 <ellipse cx="483" cy="450" rx="5" ry="24" fill="#d8a884" opacity=".8" filter="url(#b2)"/>
 <circle cx="475.300" cy="428" r="3.200" fill="#e6d2b4"/>
 <!-- lapel -->
 <path d="M362.4,318.0 C365.1,315.7 368.1,314.7 372.0,316.0 C375.9,317.3 379.9,321.1 386.0,326.0 C392.1,330.9 401.3,338.6 408.6,345.6 C415.9,352.6 424.2,361.1 430.0,368.0 C435.8,374.9 439.8,380.8 443.5,387.0 C447.2,393.2 449.5,398.9 452.5,405.0 C455.5,411.1 459.0,417.8 461.5,423.5 C464.0,429.2 468.2,436.4 467.5,439.5 C466.8,442.6 462.6,445.1 457.0,442.0 C451.4,438.9 441.2,428.3 434.0,421.0 C426.8,413.7 419.8,404.8 413.5,398.0 C407.2,391.2 402.2,385.7 396.0,380.0 C389.8,374.3 382.7,368.7 376.0,364.0 C369.3,359.3 360.0,355.3 356.0,352.0 C352.0,348.7 352.0,347.7 352.0,344.0 C352.0,340.3 354.3,334.3 356.0,330.0 C357.7,325.7 359.7,320.3 362.4,318.0Z" fill="#c2a273"/>
 <g clip-path="url(#cLapel)">
  <path d="M362,318 L369,316 L394,333 L386,341 L370,346 L355,349 L353,334Z" fill="#cdbea2" opacity=".95" filter="url(#b1)"/>
  <path d="M360,322 C357,332 356,340 358,348" fill="none" stroke="#e9dcc2" stroke-width="3.500" opacity=".9" filter="url(#b1)"/>
  <ellipse cx="375" cy="347" rx="15" ry="5.500" transform="rotate(33 375 347)" fill="#7f6c4c" opacity=".85" filter="url(#b2)"/>
  <path d="M372,334 C384,340 394,347 404,357" fill="none" stroke="#8d7856" stroke-width="5" opacity=".6" filter="url(#b2)"/>
  <path d="M383,358 C398,366 412,376 426,392 C438,406 448,420 458,436" fill="none" stroke="#dfc08e" stroke-width="8" opacity=".95" filter="url(#b2)"/>
  <path d="M396,334 C410,346 422,360 434,378 C444,394 452,408 460,424" fill="none" stroke="#927048" stroke-width="6" opacity=".75" filter="url(#b2)"/>
  <path d="M360,352 C374,360 388,370 400,382" fill="none" stroke="#e2cfae" stroke-width="3" opacity=".8" filter="url(#b1)"/>
  <ellipse cx="448" cy="418" rx="16" ry="26" transform="rotate(-35 448 418)" fill="#c8965f" opacity=".55" filter="url(#b6)"/>
 </g>
 <!-- lapel lower edge shadow -->
 <path d="M352.0,347.0 C353.0,348.3 354.0,351.7 358.0,355.0 C362.0,358.3 369.7,362.3 376.0,367.0 C382.3,371.7 389.8,377.3 396.0,383.0 C402.2,388.7 407.2,394.2 413.5,401.0 C419.8,407.8 426.8,416.8 434.0,424.0 C441.2,431.2 453.2,440.7 457.0,444.0" fill="none" stroke="#3f2e1e" stroke-width="3" opacity=".85" filter="url(#b1)"/>
 <!-- shoulder seam -->
 <path d="M399,392 C404,410 408,440 416,484" fill="none" stroke="#ecd4bc" stroke-width="4.500" opacity=".95" filter="url(#b1)"/>
 <path d="M402,392 C407,410 411,440 418.500,484" fill="none" stroke="#7d5f40" stroke-width="1.300" opacity=".8"/>
 <!-- sleeve seam arc -->
 <path d="M443.0,490.0 C441.6,489.6 438.9,488.5 434.5,487.5 C430.1,486.5 422.6,483.8 416.5,484.0 C410.4,484.2 404.9,485.5 398.0,489.0 C391.1,492.5 382.8,500.0 375.0,505.0 C367.2,510.0 357.4,513.8 351.0,519.0 C344.6,524.2 340.3,530.0 336.7,536.0 C333.1,542.0 331.5,548.2 329.5,555.0 C327.5,561.8 327.1,570.2 324.7,577.0 C322.3,583.8 317.8,588.8 315.0,596.0 C312.2,603.2 309.4,610.3 308.0,620.0 C306.6,629.7 306.8,648.3 306.5,654.0" fill="none" stroke="#ecd6b8" stroke-width="3.400" opacity=".95" filter="url(#b1)"/>
 <path d="M444.8,491.8 C443.4,491.4 440.7,490.3 436.3,489.3 C431.9,488.3 424.4,485.6 418.3,485.8 C412.2,486.1 406.7,487.3 399.8,490.8 C392.9,494.3 384.6,501.8 376.8,506.8 C369.0,511.8 359.2,515.6 352.8,520.8 C346.4,526.0 342.1,531.8 338.5,537.8 C334.9,543.8 333.3,550.0 331.3,556.8 C329.3,563.6 328.9,572.0 326.5,578.8 C324.1,585.6 319.6,590.6 316.8,597.8 C314.0,605.0 311.2,612.1 309.8,621.8 C308.4,631.5 308.6,650.1 308.3,655.8" fill="none" stroke="#6d4d2e" stroke-width="1.300" opacity=".8"/>
 <!-- sleeve right edge -->
 <path d="M443.0,490.0 C444.9,492.8 451.5,498.4 454.3,507.0 C457.1,515.6 458.8,528.5 460.0,541.4 C461.2,554.3 461.6,571.4 461.4,584.3 C461.2,597.2 458.6,607.0 458.6,618.6 C458.6,630.2 460.9,648.1 461.4,654.0" fill="none" stroke="#6d4a2a" stroke-width="3" opacity=".6" filter="url(#b2)"/>
 <!-- back panel double stitching -->
 <path d="M297,478 C299,500 302,520 309,538 C314,551 320,561 326,570" fill="none" stroke="#eadcc4" stroke-width="1.100" opacity=".85"/>
 <path d="M294,480 C296,502 299,522 306,540 C311,553 317,563 323,572" fill="none" stroke="#eadcc4" stroke-width="1" opacity=".6"/>
 <path d="M295.500,479 C297.500,501 300.500,521 307.500,539 C312.500,552 318.500,562 324.500,571" fill="none" stroke="#8a7048" stroke-width="1" opacity=".5"/>
 <!-- pocket flap -->
 <path d="M461.500,525 L483,510 L494,548 C490,556 478,562 468,562 C464,561 462,558 462,554Z" fill="#dcba92" opacity=".85" filter="url(#b1)"/>
 <path d="M461.500,525 L483,510 M462,528 L462.500,556 C465,563 472,562 480,558 L494,550" fill="none" stroke="#f2e0c6" stroke-width="1.700" opacity=".95"/>
 <path d="M465.700,566 L468,600 L472,646 M497,566 L503,600 L507,640 M472,646 L500,650" fill="none" stroke="#ecd4b2" stroke-width="1.500" opacity=".8"/>
</g>

</svg>
</div>
</body></html>
